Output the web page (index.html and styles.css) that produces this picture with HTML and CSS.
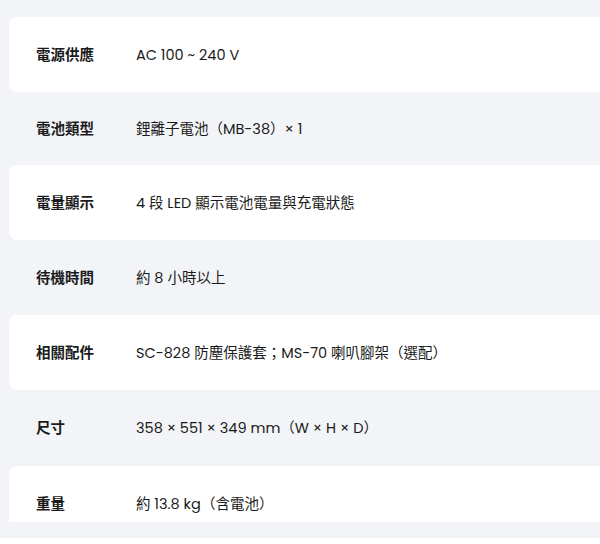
FILE: index.html
```html
<!DOCTYPE html>
<html lang="zh-Hant">
<head>
<meta charset="utf-8">
<title>規格</title>
<link rel="stylesheet" href="styles.css">
</head>
<body>
<div class="spec-wrap">
  <div class="spec-list">
    <div class="spec-row is-card"><div class="spec-label">電源供應</div><div class="spec-value">AC 100 ~ 240 V</div></div>
    <div class="spec-row is-short"><div class="spec-label">電池類型</div><div class="spec-value">鋰離子電池（MB-38）× 1</div></div>
    <div class="spec-row is-card"><div class="spec-label">電量顯示</div><div class="spec-value">4 段 LED 顯示電池電量與充電狀態</div></div>
    <div class="spec-row"><div class="spec-label">待機時間</div><div class="spec-value">約 8 小時以上</div></div>
    <div class="spec-row is-card"><div class="spec-label">相關配件</div><div class="spec-value">SC-828 防塵保護套；MS-70 喇叭腳架（選配）</div></div>
    <div class="spec-row is-tall"><div class="spec-label">尺寸</div><div class="spec-value">358 × 551 × 349 mm（W × H × D）</div></div>
    <div class="spec-row is-card"><div class="spec-label">重量</div><div class="spec-value">約 13.8 kg（含電池）</div></div>
  </div>
</div>
</body>
</html>
```
FILE: styles.css
```css
* { box-sizing: border-box; }
html, body { margin: 0; padding: 0; background: #ffffff; }
body {
  font-family: "Poppins", Inter, "Noto Sans CJK TC", sans-serif;
  color: #1a1b20;
  font-size: 14.5px;
  line-height: 20px;
  overflow: hidden;
}
.spec-wrap {
  background: #f3f4f8;
  height: 538px;
  padding: 17px 0 16px 9px;
}
.spec-list {
  height: 505px;
  overflow: hidden;
  display: flex;
  flex-direction: column;
}
.spec-row {
  flex: 0 0 75px;
  height: 75px;
  display: flex;
  align-items: center;
  padding-left: 27px;
}
.spec-row.is-short { flex-basis: 73px; height: 73px; }
.spec-row.is-tall { flex-basis: 76px; height: 76px; }
.spec-row.is-card {
  background: #ffffff;
  border-radius: 8px 0 0 8px;
}
.spec-label {
  width: 100px;
  flex: 0 0 100px;
  font-weight: 700;
}
.spec-value {
  font-weight: 400;
}
```
